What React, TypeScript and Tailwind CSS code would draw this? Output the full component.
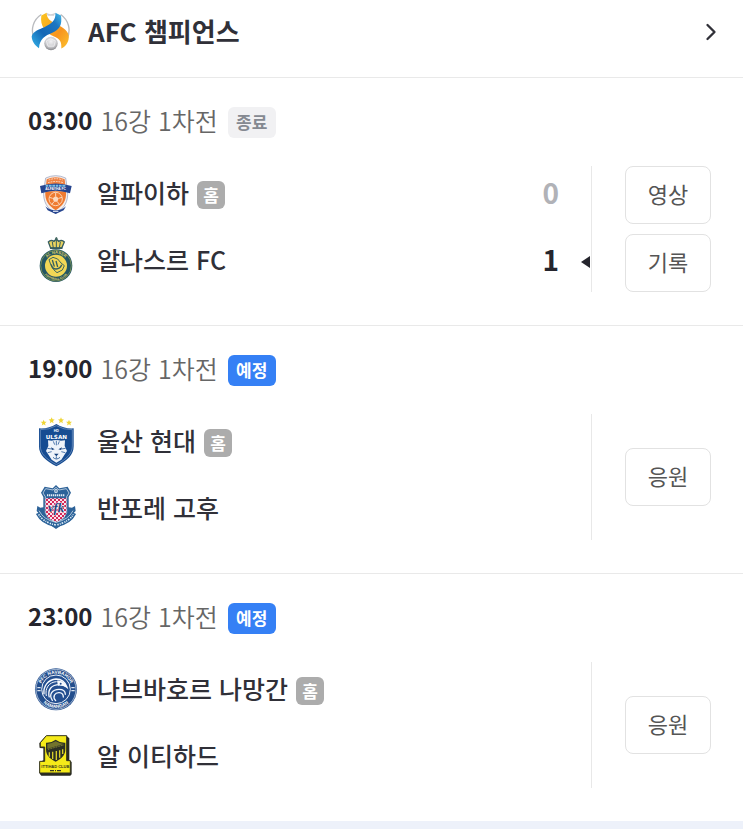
import type { ReactNode } from 'react';
import { ChevronRight } from 'lucide-react';

interface Team {
  name: string;
  logo: ReactNode;
  home?: boolean;
  score?: number;
  winner?: boolean;
}

interface Match {
  time: string;
  round: string;
  status: '종료' | '예정';
  teams: Team[];
  actions: string[];
}

const LeagueLogo = () => (
  <svg viewBox="33 33 117 122" className="h-[41px] w-[39px] shrink-0" aria-hidden="true">
    <defs>
      <linearGradient id="afc-blue" x1="0" y1="1" x2="1" y2="0">
        <stop offset="0" stopColor="#35b5ea" />
        <stop offset="0.4" stopColor="#1467b5" />
        <stop offset="0.75" stopColor="#1c76c2" />
        <stop offset="1" stopColor="#46bdea" />
      </linearGradient>
      <linearGradient id="afc-gold" x1="0" y1="0" x2="1" y2="1">
        <stop offset="0" stopColor="#fbc51f" />
        <stop offset="0.6" stopColor="#f7941e" />
        <stop offset="1" stopColor="#fcc22d" />
      </linearGradient>
      <radialGradient id="afc-ball" cx="0.5" cy="0.35" r="0.7">
        <stop offset="0" stopColor="#f2f2f4" />
        <stop offset="0.6" stopColor="#c9c9cc" />
        <stop offset="1" stopColor="#77787c" />
      </radialGradient>
    </defs>
    <path d="M64 43C40 58 30 88 43 118" fill="none" stroke="#b9bbbf" strokeWidth="4" />
    <path d="M122 43c24 17 32 46 19 75" fill="none" stroke="#b9bbbf" strokeWidth="4" />
    <path d="M79 38q13 8 27 0l-4 9H83z" fill="#cfd0d3" />
    {/* gold ribbon: upper left down to the lower right */}
    <path d="M64 46l16-8c0 14 7 22 22 30 20 11 41 20 44 38 2 16-6 32-22 39 1-20-3-28-22-36C77 98 59 78 64 46z" fill="url(#afc-gold)" />
    {/* blue ribbon: upper right down to the lower left, on top */}
    <path d="M106 38l17 8c4 28-4 42-26 52-22 9-38 18-40 46-13-8-21-21-22-35 3-16 22-21 38-28 22-10 35-20 33-43z" fill="url(#afc-blue)" />
    <circle cx="93" cy="130" r="20" fill="url(#afc-ball)" />
    <path d="M79 122l13-6 14 6-4 16H84z" fill="none" stroke="#f6f6f7" strokeWidth="2" />
  </svg>
);

const AlFayhaLogo = () => (
  <svg viewBox="24 21 168 168" className="size-14" aria-hidden="true">
    <path d="M77 54q30-14 60 0l6 38c2 33-9 53-36 68-27-15-38-35-36-68z" fill="#f4ede9" stroke="#8f9abb" strokeWidth="2" />
    <path d="M80 58q27-13 54 0l2 17H78z" fill="#ef8141" />
    <path d="M86 60q21-8 42 0M84 68q23-7 46 0" fill="none" stroke="#fbdcc8" strokeWidth="3" strokeDasharray="5 3" />
    <path d="M76 94h62c2 28-9 43-31 57-22-14-33-29-31-57z" fill="#ef7a30" />
    <circle cx="107" cy="117" r="20" fill="none" stroke="#fbd3b4" strokeWidth="3" />
    <path d="M107 108l9 7-4 10h-10l-4-10z" fill="#fbd9bf" />
    <path d="M107 108V98M116 115l10-3M112 125l7 9M102 125l-7 9M98 115l-10-3" stroke="#fbd9bf" strokeWidth="3" />
    <path d="M60 78q47-15 95 0l-5 22-12-3q-31-9-62 0l-12 3z" fill="#26458f" />
    <path d="M77 77h61" stroke="#76bde5" strokeWidth="6" strokeDasharray="8 2" />
    <text x="107" y="91" textAnchor="middle" fontSize="10" fontFamily="Liberation Sans, sans-serif" fontWeight="700" fill="#fff">ALFAYHA FC</text>
    <path d="M76 139q12 12 31 12t31-12l-7 12-24 11-24-11z" fill="#26458f" />
    <path d="M99 154h16" stroke="#c9d3e8" strokeWidth="4" />
  </svg>
);

const AlNassrLogo = () => (
  <svg viewBox="24 15 168 168" className="size-14" aria-hidden="true">
    <path d="M92 58L85 39q7-8 17-2l7-7 7 7q10-6 17 2l-8 19z" fill="#ead35e" stroke="#365d61" strokeWidth="4" />
    <path d="M109 30v27M97 39l3 18M121 39l-3 18" stroke="#365d61" strokeWidth="3" />
    <path d="M109 24v10M105 28h8" stroke="#466a63" strokeWidth="3" />
    <path d="M91 57h36" stroke="#365d61" strokeWidth="5" />
    <circle cx="108" cy="110" r="49" fill="#245663" />
    <circle cx="108" cy="110" r="46" fill="none" stroke="#9ca852" strokeWidth="2" />
    <circle cx="108" cy="110" r="33" fill="#f1d756" />
    <path id="nassr-top" d="M72 110a36 36 0 0172 0" fill="none" />
    <path id="nassr-bottom" d="M65 110a43 43 0 0086 0" fill="none" />
    <text fontSize="12" fontFamily="Liberation Sans, sans-serif" fontWeight="700" fill="#e0d568" textAnchor="middle">
      <textPath href="#nassr-top" startOffset="50%">AL NASSR</textPath>
    </text>
    <text fontSize="9" fontFamily="Liberation Sans, sans-serif" fontWeight="700" fill="#e0d568" textAnchor="middle">
      <textPath href="#nassr-bottom" startOffset="50%">FOOTBALL CLUB</textPath>
    </text>
    {/* map outline with the calligraphy strokes inside */}
    <path d="M87 92l12-7 14 5 10 12 10 8-6 13-16 8-10-9-8-13z" fill="none" stroke="#3f685e" strokeWidth="3" />
    <path d="M97 93l6 20M94 106q2 14 14 14 13-1 17-13M108 96l5 18" fill="none" stroke="#355f60" strokeWidth="4" />
  </svg>
);

const UlsanLogo = () => (
  <svg viewBox="24 21 168 168" className="size-14" aria-hidden="true">
    <defs>
      <path id="ulsan-star" d="M0-9l2.600 6 6.400.6-5 4.400 1.700 6.500L0 5l-5.700 3.500L-4 2l-5-4.400 6.400-.6z" fill="#efd535" />
    </defs>
    <use href="#ulsan-star" x="71" y="44" />
    <use href="#ulsan-star" x="95" y="37" />
    <use href="#ulsan-star" x="123" y="37" />
    <use href="#ulsan-star" x="147" y="44" />
    <path d="M109 48q24 15 52 13v54c0 27-20 43-52 60-32-17-52-33-52-60V61q28 2 52-13z" fill="#164c92" />
    <path d="M109 53q23 13 48 12v49c0 24-18 39-48 56-30-17-48-32-48-56V65q25 1 48-12z" fill="none" stroke="#7f9dc4" strokeWidth="2" />
    <text x="109" y="71" textAnchor="middle" fontSize="11" fontFamily="Liberation Sans, sans-serif" fontWeight="700" fill="#fff">HD</text>
    <text x="109" y="92" textAnchor="middle" fontSize="17" fontFamily="DejaVu Sans, sans-serif" fontWeight="700" fill="#fff">ULSAN</text>
    <path d="M84 97l11 1q14-4 28 0l12-1-1 17 7 15-8 12-9 14-15 9-14-9-9-14-8-12 7-15z" fill="#eef3fa" />
    <path d="M100 100l4 10M118 100l-4 10M109 98v14M82 121l13 2M137 121l-13 2M83 134l12-3M136 134l-12-3" stroke="#4f78ad" strokeWidth="3" />
    <path d="M93 118l11 6-8 2zM126 118l-11 6 8 2zM102 137h14l-7 8z" fill="#143f7b" />
    <path d="M109 145v7M99 148q10 10 21 0" fill="none" stroke="#436da1" strokeWidth="3" />
  </svg>
);

const KofuLogo = () => (
  <svg viewBox="24 15 168 168" className="size-14" aria-hidden="true">
    <defs>
      <pattern id="kofu-check" width="12" height="12" patternUnits="userSpaceOnUse">
        <rect width="12" height="12" fill="#f9e6ed" />
        <rect width="6" height="6" fill="#d52658" />
        <rect x="6" y="6" width="6" height="6" fill="#d52658" />
      </pattern>
    </defs>
    <path d="M108 24l10 10 25-5 10 18-7 13v31l10 1 9-5 2 15-9 9 2 10-12 12-18 8-22 15-22-15-18-8-12-12 2-10-8-9 2-15 9 5 9-1V60l-7-13 11-18 24 5z" fill="#2d6298" />
    <path d="M108 31l9 8 22-4 8 13-7 11v48l-9 16-23 14-23-14-9-16V59l-7-11 8-13 22 4z" fill="#2c6299" stroke="#f2f6fb" strokeWidth="2" />
    <path d="M77 64h62v37c0 16-10 24-31 34-21-10-31-18-31-34z" fill="url(#kofu-check)" />
    <path d="M81 55h54" stroke="#e3edf6" strokeWidth="6" strokeDasharray="4 2" />
    <circle cx="108" cy="42" r="6" fill="#dce8f3" />
    <path d="M104 42h8" stroke="#356394" strokeWidth="3" />
    <text x="108" y="104" textAnchor="middle" fontSize="38" fontFamily="Liberation Serif, serif" fontStyle="italic" fontWeight="700" fill="#1f4580" stroke="#f8e7ed" strokeWidth="3" paintOrder="stroke">vfk</text>
    <path d="M54 108q14 28 54 36 40-8 54-36" fill="none" stroke="#2c6399" strokeWidth="14" />
    <path d="M57 101q13 27 51 35 38-8 51-35" fill="none" stroke="#f2f6fb" strokeWidth="2" />
    <path d="M56 112q14 24 52 32 38-8 52-32" fill="none" stroke="#e1edf7" strokeWidth="5" strokeDasharray="4 3 3 3 5 4" />
  </svg>
);

const NavbahorLogo = () => (
  <svg viewBox="24 21 168 168" className="size-14" aria-hidden="true">
    <circle cx="108" cy="100" r="63" fill="#234e8d" />
    <circle cx="108" cy="100" r="60" fill="none" stroke="#dce5f1" strokeWidth="2" />
    <circle cx="108" cy="100" r="43" fill="#244f90" stroke="#edf3fa" strokeWidth="3" />
    <path id="navbahor-top" d="M61 100a47 47 0 0194 0" fill="none" />
    <path id="navbahor-bottom" d="M52 100a56 56 0 00112 0" fill="none" />
    <text fontSize="14" fontFamily="Liberation Sans, sans-serif" fontWeight="700" fill="#fff" textAnchor="middle">
      <textPath href="#navbahor-top" startOffset="50%">PFC NAVBAHOR</textPath>
    </text>
    <text fontSize="14" fontFamily="Liberation Sans, sans-serif" fontWeight="700" fill="#fff" textAnchor="middle">
      <textPath href="#navbahor-bottom" startOffset="50%">NAMANGAN</textPath>
    </text>
    <path d="M52 95h10M52 104h10M154 95h10M154 104h10" stroke="#dce5f1" strokeWidth="4" />
    {/* bird head with feathers sweeping down the left */}
    <path d="M72 115c-3-24 12-44 36-46 18 0 28 10 33 25-7-6-14-8-22-8-26 0-37 16-31 38" fill="none" stroke="#f7fafe" strokeWidth="4" />
    <path d="M79 120c-5-23 8-42 31-43" fill="none" stroke="#f7fafe" strokeWidth="3" />
    <path d="M111 74c15-2 25 7 31 22-8-7-17-9-28-7z" fill="#f7fafe" />
    <path d="M97 133c-12-17 0-33 20-33 13 0 19 7 19 15M107 134c-11-12-2-25 11-24 9 1 12 6 12 13" fill="none" stroke="#f1f6fc" strokeWidth="4" strokeLinecap="round" />
    <circle cx="122" cy="83" r="3" fill="#244f90" />
  </svg>
);

const IttihadLogo = () => (
  <svg viewBox="24 21 168 168" className="size-14" aria-hidden="true">
    <path d="M77 40h64l7 6v66l7 5v37l-4 4H64l-5-6v-34l11-6V76l-11-1-1-14z" fill="#292a22" />
    <path d="M79 38h61v75h11v37H59v-35h15V72H61V59z" fill="#f5ea19" stroke="#33331e" strokeWidth="3" />
    <path d="M107 50q13 10 29 9v20c0 18-11 28-29 37-18-9-29-19-29-37V59q16 1 29-9z" fill="#2c3025" />
    <path d="M107 55q12 7 25 8v6l-50 12V63q13-1 25-8z" fill="#72732d" />
    <path d="M81 82l52-15" stroke="#2b2f25" strokeWidth="8" />
    <path d="M84 79l47-13" stroke="#b8b338" strokeWidth="2" strokeDasharray="3 2" />
    <path d="M88 88v13M98 86v22M109 84v27M119 82v22M128 79v14" stroke="#d7ce2a" strokeWidth="4" />
    <text x="106" y="135" textAnchor="middle" fontSize="12" fontFamily="Liberation Sans, sans-serif" fontWeight="700" fill="#353620">ITTIHAD CLUB</text>
    <path d="M90 143h12M105 143h3M111 143h12" stroke="#353620" strokeWidth="4" />
  </svg>
);

const matches: Match[] = [
  {
    time: '03:00',
    round: '16강 1차전',
    status: '종료',
    teams: [
      { name: '알파이하', logo: <AlFayhaLogo />, home: true, score: 0 },
      { name: '알나스르 FC', logo: <AlNassrLogo />, score: 1, winner: true },
    ],
    actions: ['영상', '기록'],
  },
  {
    time: '19:00',
    round: '16강 1차전',
    status: '예정',
    teams: [
      { name: '울산 현대', logo: <UlsanLogo />, home: true },
      { name: '반포레 고후', logo: <KofuLogo /> },
    ],
    actions: ['응원'],
  },
  {
    time: '23:00',
    round: '16강 1차전',
    status: '예정',
    teams: [
      { name: '나브바호르 나망간', logo: <NavbahorLogo />, home: true },
      { name: '알 이티하드', logo: <IttihadLogo /> },
    ],
    actions: ['응원'],
  },
];

const TeamRow = ({ team }: { team: Team }) => (
  <li className="relative flex h-[58px] items-center pr-8">
    <span className="shrink-0">{team.logo}</span>
    <span className="ml-[13px] pb-1.5 text-[25px] leading-8 font-medium text-[#303038]">{team.name}</span>
    {team.home && (
      <span className="ml-2 flex size-7 items-center justify-center rounded-md bg-[#acacac] pb-0.5 text-[17px] leading-none font-bold text-white">
        홈
      </span>
    )}
    {team.score !== undefined && (
      <span
        className={`ml-auto pb-1.5 text-[28px] leading-8 font-bold ${team.winner ? 'text-[#25252d]' : 'text-[#b1b2b7]'}`}
      >
        {team.score}
      </span>
    )}
    {team.winner && (
      <svg viewBox="0 0 10 14" className="absolute right-0 h-3.5 w-2.5" aria-label="승리">
        <path d="M9 1v12L0 7z" fill="#25252d" />
      </svg>
    )}
  </li>
);

const MatchCard = ({ match }: { match: Match }) => (
  <section className="border-t border-[#e9e9e9] pt-7 pr-8 pb-[33px] pl-7">
    <div className="flex h-8 items-center">
      <h2 className="pb-1 text-[24px] leading-8 font-bold text-[#25252d]">{match.time}</h2>
      <span className="ml-2 pb-1 text-[25px] leading-8 font-[350] text-[#666]">{match.round}</span>
      <span
        className={`ml-2.5 flex h-[31px] w-12 items-center justify-center rounded-md pb-0.5 text-[17px] leading-none font-bold ${
          match.status === '예정' ? 'bg-[#3580f5] text-white' : 'bg-[#f1f1f3] text-[#858991]'
        }`}
      >
        {match.status}
      </span>
    </div>
    <div className="mt-7 flex">
      <ul className="flex flex-1 flex-col gap-[9px] border-r border-[#e8e8e8]">
        {match.teams.map(team => (
          <TeamRow key={team.name} team={team} />
        ))}
      </ul>
      <div className="ml-[33px] flex min-h-[126px] w-[86px] flex-col justify-center gap-2.5">
        {match.actions.map(action => (
          <button
            key={action}
            type="button"
            className="h-[58px] rounded-lg border border-[#e2e2e2] pb-1 text-[22px] text-[#555]"
          >
            {action}
          </button>
        ))}
      </div>
    </div>
  </section>
);

export default function App() {
  return (
    <main lang="ko" className="min-h-screen bg-[#edf1fa] font-['Noto_Sans_CJK_KR',sans-serif]">
      <div className="bg-white">
        <a href="#league" className="flex h-[77px] items-center pr-[18px] pb-3.5 pl-[31px]">
          <LeagueLogo />
          <h1 className="ml-[18px] pb-0.5 text-[26px] leading-9 font-bold text-[#303038]">AFC 챔피언스</h1>
          <ChevronRight className="ml-auto size-7 text-[#303038]" strokeWidth={2} />
        </a>
        {matches.map(match => (
          <MatchCard key={match.time} match={match} />
        ))}
      </div>
    </main>
  );
}
